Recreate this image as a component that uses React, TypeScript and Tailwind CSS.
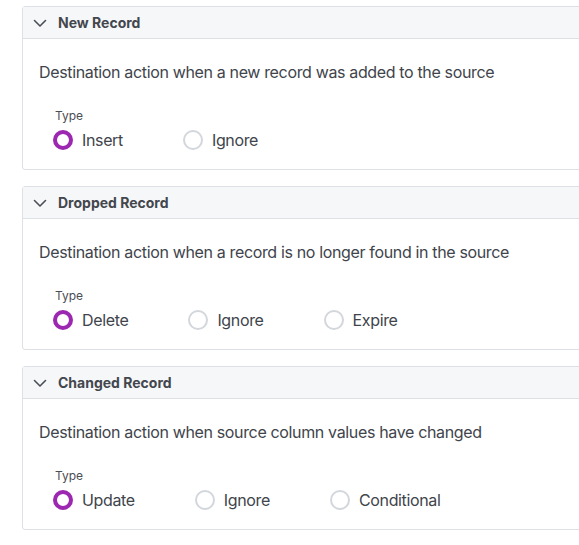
import { FC } from "react";

type Section = {
  title: string;
  description: string;
  options: string[];
};

const sections: Section[] = [
  {
    title: "New Record",
    description: "Destination action when a new record was added to the source",
    options: ["Insert", "Ignore"],
  },
  {
    title: "Dropped Record",
    description: "Destination action when a record is no longer found in the source",
    options: ["Delete", "Ignore", "Expire"],
  },
  {
    title: "Changed Record",
    description: "Destination action when source column values have changed",
    options: ["Update", "Ignore", "Conditional"],
  },
];

const Chevron: FC = () => (
  <svg width="14" height="14" viewBox="0 0 14 14" fill="none" className="shrink-0">
    <path d="M1.5 4.5 7 10l5.5-5.5" stroke="#4a4e55" strokeWidth="1.6" strokeLinecap="round" strokeLinejoin="round" />
  </svg>
);

const Radio: FC<{ label: string; checked: boolean }> = ({ label, checked }) => (
  <label className="flex items-center gap-[9px] cursor-pointer">
    <span
      className={
        checked
          ? "w-5 h-5 rounded-full border-[4px] border-[#9c27b0] bg-white"
          : "w-5 h-5 rounded-full border-2 border-[#d3d7dc] bg-white"
      }
    />
    <span className="text-[16px] leading-6 tracking-[-0.35px] text-[#40444b]">{label}</span>
  </label>
);

const Panel: FC<{ section: Section }> = ({ section }) => (
  <div className="w-[600px] border border-[#dde0e4] rounded-[3px] bg-white">
    <div className="h-[32px] flex items-center gap-[11px] pl-[10px] bg-[#f6f7f9] border-b border-[#dde0e4]">
      <Chevron />
      <span className="text-[14px] font-bold text-[#43474d]">{section.title}</span>
    </div>
    <div className="pt-[21px] pb-[17px] pl-4">
      <p className="text-[16px] leading-6 tracking-[-0.35px] text-[#40444b]">{section.description}</p>
      <div className="mt-[24px] pl-[14px]">
        <div className="pl-[2px] text-[12px] leading-4 text-[#4a4e55]">Type</div>
        <div className="mt-[4px] flex items-center gap-[60px]">
          {section.options.map((opt, i) => (
            <Radio key={opt} label={opt} checked={i === 0} />
          ))}
        </div>
      </div>
    </div>
  </div>
);

export default function App() {
  return (
    <div className="w-[579px] h-[545px] overflow-hidden bg-white font-['Inter',sans-serif]">
      <div className="pt-[6px] pl-[22px] flex flex-col gap-4">
        {sections.map((s) => (
          <Panel key={s.title} section={s} />
        ))}
      </div>
    </div>
  );
}
